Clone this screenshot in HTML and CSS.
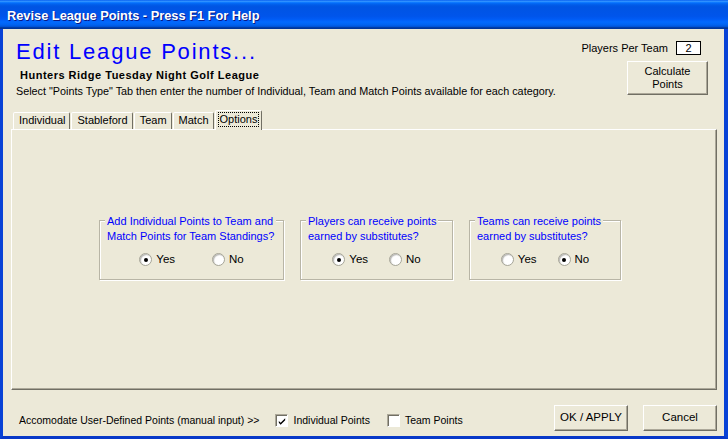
FILE: index.html
```html
<!DOCTYPE html>
<html>
<head>
<meta charset="utf-8">
<link rel="stylesheet" href="styles.css">
</head>
<body>
<div class="window">
  <div class="titlebar"><span class="title">Revise League Points - Press F1 For Help</span></div>
  <div class="frame">
    <div class="client">
      <div class="header">
        <div class="intro">
          <h1 class="heading">Edit League Points...</h1>
          <div class="league">Hunters Ridge Tuesday Night Golf League</div>
          <div class="hint">Select "Points Type" Tab then enter the number of Individual, Team and Match Points available for each category.</div>
        </div>
        <div class="side">
          <div class="ppt"><span>Players Per Team</span><span class="numbox">2</span></div>
          <div class="btn calc">Calculate<br>Points</div>
        </div>
      </div>
      <div class="tabs">
        <div class="tab">Individual</div>
        <div class="tab">Stableford</div>
        <div class="tab">Team</div>
        <div class="tab">Match</div>
        <div class="tab active"><span class="focus">Options</span></div>
      </div>
      <div class="panel">
        <div class="groups">
          <div class="group g1">
            <div class="legend">Add Individual Points to Team and<br>Match Points for Team Standings?</div>
            <div class="radios wide">
              <div class="opt"><span class="radio on"></span>Yes</div>
              <div class="opt"><span class="radio"></span>No</div>
            </div>
          </div>
          <div class="group g2">
            <div class="legend">Players can receive points<br>earned by substitutes?</div>
            <div class="radios">
              <div class="opt"><span class="radio on"></span>Yes</div>
              <div class="opt"><span class="radio"></span>No</div>
            </div>
          </div>
          <div class="group g3">
            <div class="legend">Teams can receive points<br>earned by substitutes?</div>
            <div class="radios">
              <div class="opt"><span class="radio"></span>Yes</div>
              <div class="opt"><span class="radio on"></span>No</div>
            </div>
          </div>
        </div>
      </div>
      <div class="footer">
        <div class="manual">
          <span class="manual-label">Accomodate User-Defined Points (manual input) &gt;&gt;</span>
          <div class="check-item first"><span class="checkbox"><svg width="11" height="11" viewBox="0 0 11 11"><path d="M2 5 L4 7 L9 2 L9 4 L4 9 L2 7 Z" fill="#000"/></svg></span>Individual Points</div>
          <div class="check-item"><span class="checkbox"></span>Team Points</div>
        </div>
        <div class="actions">
          <div class="btn action">OK / APPLY</div>
          <div class="btn action">Cancel</div>
        </div>
      </div>
    </div>
  </div>
</div>
</body>
</html>
```
FILE: styles.css
```css
html, body {
  margin: 0;
  padding: 0;
}
body {
  font-family: "Liberation Sans", Arial, sans-serif;
  font-size: 11px;
  color: #000;
  background: #ECE9D8;
}
.window {
  width: 728px;
  height: 439px;
  display: flex;
  flex-direction: column;
  overflow: hidden;
}
.titlebar {
  height: 29px;
  flex: none;
  display: flex;
  align-items: center;
  padding-left: 7px;
  background: linear-gradient(to bottom, #0058EE 0%, #3593FF 4%, #288EFF 6%, #127DFF 8%, #036FFC 10%, #0262EE 14%, #0057E5 20%, #0054E3 24%, #0055EB 56%, #005BF5 66%, #026AFE 76%, #0062EF 86%, #0052D6 92%, #0040AB 94%, #003092 100%);
}
.title {
  color: #fff;
  font-weight: bold;
  font-size: 12.8px;
  text-shadow: 1px 1px #0A1883;
  margin-top: 1px;
}
.frame {
  flex: 1;
  display: flex;
  border-left: 3px solid #0842D6;
  border-right: 4px solid #0842D6;
  border-bottom: 3px solid #0838C8;
  background: #ECE9D8;
}
.client {
  flex: 1;
  display: flex;
  flex-direction: column;
  background: #ECE9D8;
}
.header {
  height: 81px;
  flex: none;
  display: flex;
  justify-content: space-between;
  align-items: flex-start;
}
.intro {
  padding-left: 13px;
  padding-top: 10px;
}
.heading {
  margin: 0;
  font-family: "Liberation Sans", Arial, sans-serif;
  font-weight: normal;
  font-size: 22px;
  line-height: 26px;
  letter-spacing: 1.8px;
  color: #0000FF;
}
.league {
  margin-top: 4px;
  margin-left: 4px;
  font-weight: bold;
  line-height: 13px;
  letter-spacing: 0.5px;
}
.hint {
  margin-top: 3px;
  line-height: 13px;
  font-size: 10.8px;
}
.side {
  display: flex;
  flex-direction: column;
  align-items: flex-end;
  padding-top: 12px;
  padding-right: 16px;
}
.ppt {
  display: flex;
  align-items: center;
  gap: 8px;
  margin-right: 7px;
  line-height: 13px;
}
.numbox {
  width: 25px;
  height: 14px;
  box-sizing: border-box;
  border: 1px solid #000;
  background: #fff;
  text-align: center;
  line-height: 12px;
}
.btn {
  box-sizing: border-box;
  border: 1px solid;
  border-color: #fff #716F64 #716F64 #fff;
  box-shadow: inset -1px -1px #ACA899;
  background: #ECE9D8;
  display: flex;
  align-items: center;
  justify-content: center;
  text-align: center;
}
.calc {
  width: 81px;
  height: 34px;
  margin-top: 6px;
  line-height: 13px;
  padding-bottom: 1px;
}
.tabs {
  height: 19px;
  flex: none;
  display: flex;
  align-items: flex-end;
  padding-left: 10px;
  position: relative;
  z-index: 2;
}
.tab {
  height: 17px;
  box-sizing: border-box;
  padding: 0 4px 0 5px;
  border: 1px solid;
  border-bottom: none;
  border-color: #fff #716F64 transparent #fff;
  border-radius: 2px 2px 0 0;
  line-height: 15px;
  margin-right: 1px;
  background: #ECE9D8;
}
.tab.active {
  height: 20px;
  margin: 0 -1px -1px 0;
  padding: 2px 3px 0;
  line-height: 13px;
}
.focus {
  display: inline-block;
  outline: 1px dotted #000;
  padding: 0 1px;
  line-height: 13px;
}
.panel {
  flex: none;
  margin-left: 8px;
  width: 706px;
  height: 261px;
  box-sizing: border-box;
  border: 1px solid;
  border-color: #fff #716F64 #716F64 #fff;
  box-shadow: inset -1px -1px #ACA899;
  padding-top: 90px;
}
.groups {
  display: flex;
  gap: 16px;
  margin-left: 87px;
}
.group {
  box-sizing: border-box;
  height: 60px;
  border: 1px solid #B8B5A6;
  box-shadow: inset 1px 1px #fff, 1px 1px #fff;
}
.g1 { width: 185px; }
.g2 { width: 153px; }
.g3 { width: 152px; }
.legend {
  display: inline-block;
  white-space: nowrap;
  margin-top: -7px;
  margin-left: 5px;
  padding: 0 2px;
  background: #ECE9D8;
  color: #0000FF;
  line-height: 15px;
  font-size: 11px;
}
.radios {
  display: flex;
  justify-content: center;
  gap: 21px;
  margin-top: 8px;
  line-height: 15px;
}
.radios.wide {
  gap: 37px;
}
.opt {
  display: flex;
  align-items: center;
  gap: 4px;
  font-size: 11.5px;
}
.radio {
  width: 13px;
  height: 13px;
  box-sizing: border-box;
  border-radius: 50%;
  border: 1px solid #A6A598;
  background: radial-gradient(circle at 60% 60%, #fff 0%, #fff 45%, #E4E3DC 100%);
  box-shadow: inset 1px 1px 1px rgba(0,0,0,0.25);
  display: flex;
  align-items: center;
  justify-content: center;
}
.radio.on::after {
  content: "";
  width: 4px;
  height: 4px;
  border-radius: 50%;
  background: #000;
}
.footer {
  flex: 1;
  display: flex;
  justify-content: space-between;
  align-items: flex-start;
  padding: 15px 7px 0 16px;
}
.manual {
  display: flex;
  align-items: center;
  margin-top: 9px;
  line-height: 13px;
  font-size: 10.5px;
}
.check-item {
  display: flex;
  align-items: center;
  gap: 5px;
  margin-left: 17px;
}
.check-item.first {
  margin-left: 16px;
}
.checkbox {
  width: 13px;
  height: 13px;
  box-sizing: border-box;
  border: 1px solid;
  border-color: #ACA899 #fff #fff #ACA899;
  box-shadow: inset 1px 1px #716F64;
  background: #fff;
  display: flex;
  align-items: center;
  justify-content: center;
}
.checkbox svg {
  display: block;
  margin: 1px 0 0 1px;
}
.actions {
  display: flex;
  gap: 15px;
}
.action {
  width: 74px;
  height: 26px;
  font-size: 11.5px;
  padding-bottom: 2px;
}
```
